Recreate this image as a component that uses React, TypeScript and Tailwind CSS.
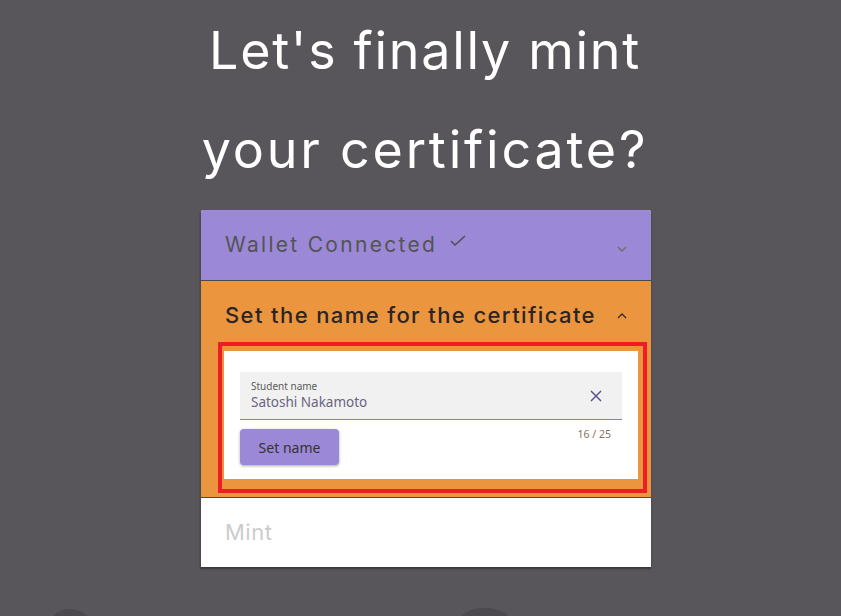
import React from "react";

const poppins = { fontFamily: '"Inter", "Noto Sans", sans-serif' };
const ubuntu = { fontFamily: '"Noto Sans", sans-serif' };

function ChevronDown() {
  return (
    <svg width="10" height="6" viewBox="0 0 10 6" className="text-[#6d6d6d]">
      <path d="M1 1l4 4 4-4" fill="none" stroke="currentColor" strokeWidth="1.4" />
    </svg>
  );
}

function ChevronUp() {
  return (
    <svg width="10" height="6" viewBox="0 0 10 6" className="text-[#3a2a2a]">
      <path d="M1 5l4-4 4 4" fill="none" stroke="currentColor" strokeWidth="1.4" />
    </svg>
  );
}

export default function App() {
  return (
    <div className="relative h-[616px] w-[841px] overflow-hidden bg-[#58565a]">
      {/* Heading */}
      <div
        className="pl-[9px] pt-[1px] text-center text-[52px] font-normal leading-[99px] text-white"
        style={poppins}
      >
        <div className="tracking-[1.7px]">Let's finally mint</div>
        <div className="tracking-[2.8px]">your certificate?</div>
      </div>

      {/* Stepper card */}
      <div className="ml-[200px] mt-[11px] w-[451px] overflow-hidden rounded-t-[3px] border-l border-[#4a4a4c] bg-white shadow-[0_2px_2px_rgba(0,0,0,0.35)]">
        <div className="flex h-[70px] items-center justify-between bg-[#9b88d6] pl-6 pr-[24px]">
          <div className="flex items-start gap-[12px]">
            <span className="text-[21px] tracking-[2.3px] text-[#545454]" style={poppins}>
              Wallet Connected
            </span>
            <svg width="18" height="14" viewBox="0 0 18 14" className="mt-[5px] text-[#4f4f4f]">
              <path d="M2 7l4 4 10-9" fill="none" stroke="currentColor" strokeWidth="1.5" />
            </svg>
          </div>
          <div className="mt-[8px]">
            <ChevronDown />
          </div>
        </div>

        <div className="border-t border-[#4a4a4c] bg-[#ec953f] pb-[4px]">
          <div className="flex h-[61px] items-center justify-between pl-6 pr-[24px] pt-[8px]">
            <span className="text-[22px] font-medium tracking-[1.4px] text-[#2b2424]" style={poppins}>
              Set the name for the certificate
            </span>
            <ChevronUp />
          </div>

          <div className="ml-[17px] mr-[4px] border-[4px] border-[#ee1c24] pb-[10px] pl-[2px] pr-[5px] pt-[5px]">
            <div className="h-[128px] bg-white px-[16px] pt-[21px]">
              <div className="flex h-[48px] items-center justify-between border-b border-[#8c80a8] bg-[#f1f1f1] pl-[11px] pr-[20px]">
                <div className="flex flex-col" style={ubuntu}>
                  <span className="text-[10px] leading-[13px] text-[#5a5a5a]">Student name</span>
                  <span className="text-[13.5px] leading-[19px] text-[#6a6480]">Satoshi Nakamoto</span>
                </div>
                <svg width="12" height="12" viewBox="0 0 12 12" className="text-[#5e5288]">
                  <path d="M1 1l10 10M11 1L1 11" fill="none" stroke="currentColor" strokeWidth="1.5" />
                </svg>
              </div>
              <div className="flex items-start justify-between">
                <button
                  className="mt-[9px] h-[36px] w-[99px] rounded-[4px] bg-[#9b88d6] text-[14px] text-[#333] shadow-[0_1px_3px_rgba(0,0,0,0.35)]"
                  style={ubuntu}
                >
                  Set name
                </button>
                <span className="mr-[11px] mt-[7px] text-[10.5px] text-[#8a6f5e]" style={ubuntu}>
                  16 / 25
                </span>
              </div>
            </div>
          </div>
        </div>

        <div className="flex h-[70px] items-center border-t border-[#4a4a4c] bg-white pl-6">
          <span className="text-[22px] tracking-[0.5px] text-[#cccccc]" style={poppins}>
            Mint
          </span>
        </div>
      </div>

      {/* partially visible shapes at bottom */}
      <div className="absolute left-[46px] top-[609px] h-[50px] w-[48px] rounded-full bg-[#4c4a4e]" />
      <div className="absolute left-[452px] top-[608px] h-[60px] w-[66px] rounded-full bg-[#4c4a4e]" />
    </div>
  );
}
